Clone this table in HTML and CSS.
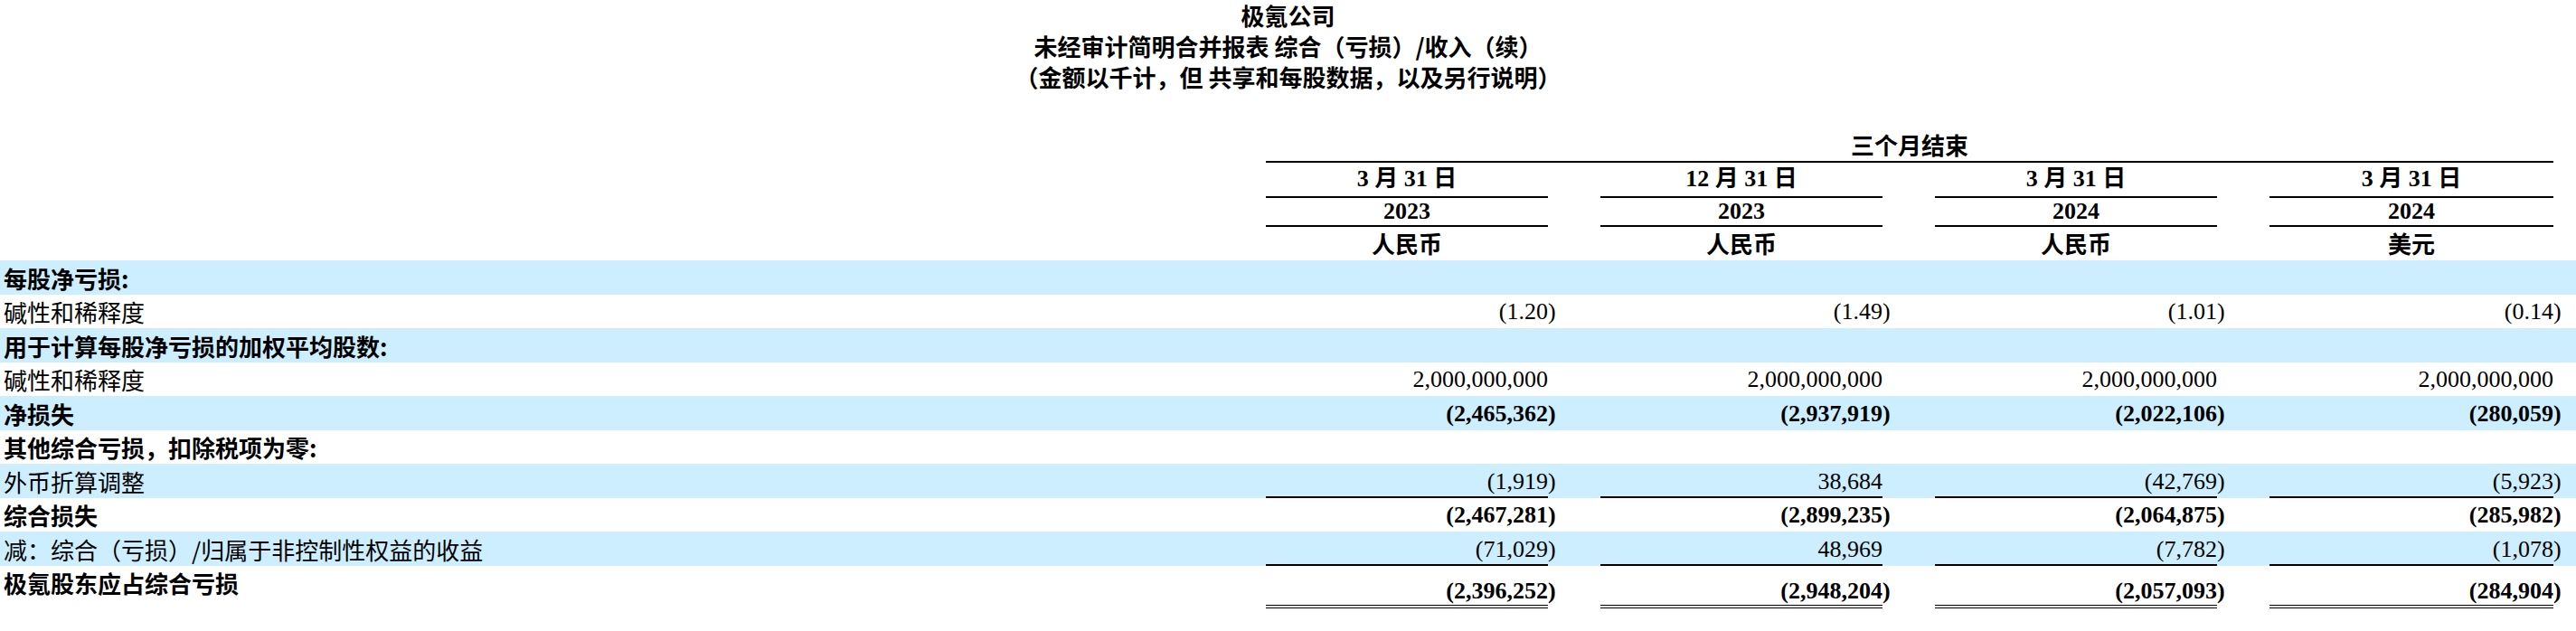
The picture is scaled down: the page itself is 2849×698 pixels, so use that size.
FILE: index.html
```html
<!DOCTYPE html>
<html lang="zh-CN">
<head>
<meta charset="utf-8">
<title>极氪公司 未经审计简明合并报表</title>
<link rel="stylesheet" href="styles.css">
</head>
<body>
<header class="title">
  <div>极氪公司</div>
  <div>未经审计简明合并报表 综合（亏损）/收入（续）</div>
  <div>（金额以千计，但 共享和每股数据，以及另行说明）</div>
</header>

<section class="statement">
  <div class="grid head-a">
    <div></div>
    <div class="period">三个月结束</div>
  </div>
  <div class="grid head-b">
    <div></div>
    <div class="hc">3 月 31 日</div>
    <div class="hc">12 月 31 日</div>
    <div class="hc">3 月 31 日</div>
    <div class="hc">3 月 31 日</div>
  </div>
  <div class="grid head-c">
    <div></div>
    <div class="hc">2023</div>
    <div class="hc">2023</div>
    <div class="hc">2024</div>
    <div class="hc">2024</div>
  </div>
  <div class="grid head-d">
    <div></div>
    <div class="hc cur">人民币</div>
    <div class="hc cur">人民币</div>
    <div class="hc cur">人民币</div>
    <div class="hc cur">美元</div>
  </div>

  <div class="grid row blue bold">
    <div class="lab">每股净亏损:</div>
    <div class="val"></div><div class="val"></div><div class="val"></div><div class="val"></div>
  </div>
  <div class="grid row">
    <div class="lab">碱性和稀释度</div>
    <div class="val"><span>(1.20<span class="rp">)</span></span></div>
    <div class="val"><span>(1.49<span class="rp">)</span></span></div>
    <div class="val"><span>(1.01<span class="rp">)</span></span></div>
    <div class="val"><span>(0.14<span class="rp">)</span></span></div>
  </div>
  <div class="grid row blue bold">
    <div class="lab">用于计算每股净亏损的加权平均股数:</div>
    <div class="val"></div><div class="val"></div><div class="val"></div><div class="val"></div>
  </div>
  <div class="grid row">
    <div class="lab">碱性和稀释度</div>
    <div class="val"><span>2,000,000,000</span></div>
    <div class="val"><span>2,000,000,000</span></div>
    <div class="val"><span>2,000,000,000</span></div>
    <div class="val"><span>2,000,000,000</span></div>
  </div>
  <div class="grid row blue bold">
    <div class="lab">净损失</div>
    <div class="val"><span>(2,465,362<span class="rp">)</span></span></div>
    <div class="val"><span>(2,937,919<span class="rp">)</span></span></div>
    <div class="val"><span>(2,022,106<span class="rp">)</span></span></div>
    <div class="val"><span>(280,059<span class="rp">)</span></span></div>
  </div>
  <div class="grid row bold">
    <div class="lab">其他综合亏损，扣除税项为零:</div>
    <div class="val"></div><div class="val"></div><div class="val"></div><div class="val"></div>
  </div>
  <div class="grid row blue">
    <div class="lab">外币折算调整</div>
    <div class="val ul"><span>(1,919<span class="rp">)</span></span></div>
    <div class="val ul"><span>38,684</span></div>
    <div class="val ul"><span>(42,769<span class="rp">)</span></span></div>
    <div class="val ul"><span>(5,923<span class="rp">)</span></span></div>
  </div>
  <div class="grid row bold">
    <div class="lab">综合损失</div>
    <div class="val"><span>(2,467,281<span class="rp">)</span></span></div>
    <div class="val"><span>(2,899,235<span class="rp">)</span></span></div>
    <div class="val"><span>(2,064,875<span class="rp">)</span></span></div>
    <div class="val"><span>(285,982<span class="rp">)</span></span></div>
  </div>
  <div class="grid row blue">
    <div class="lab">减：综合（亏损）/归属于非控制性权益的收益</div>
    <div class="val ul"><span>(71,029<span class="rp">)</span></span></div>
    <div class="val ul"><span>48,969</span></div>
    <div class="val ul"><span>(7,782<span class="rp">)</span></span></div>
    <div class="val ul"><span>(1,078<span class="rp">)</span></span></div>
  </div>
  <div class="grid row last bold">
    <div class="lab">极氪股东应占综合亏损</div>
    <div class="val dul"><span>(2,396,252<span class="rp">)</span></span></div>
    <div class="val dul"><span>(2,948,204<span class="rp">)</span></span></div>
    <div class="val dul"><span>(2,057,093<span class="rp">)</span></span></div>
    <div class="val dul"><span>(284,904<span class="rp">)</span></span></div>
  </div>
</section>
</body>
</html>
```

FILE: styles.css
```css
* { box-sizing: border-box; }

html, body {
  margin: 0;
  padding: 0;
  background: #ffffff;
  color: #000000;
}

body {
  width: 2849px;
  font-family: "Liberation Serif", "Noto Sans CJK SC", serif;
  font-size: 26px;
}

.title {
  text-align: center;
  font-family: "Noto Sans CJK SC", sans-serif;
  font-weight: 700;
  font-size: 26px;
  line-height: 34px;
}

.grid {
  display: grid;
  grid-template-columns: 1fr 312px 312px 312px 314px;
  column-gap: 58px;
  padding: 0 25px 0 4px;
}

.head-a { margin-top: 42px; }

.period {
  grid-column: 2 / 6;
  text-align: center;
  font-family: "Noto Sans CJK SC", sans-serif;
  font-weight: 700;
  line-height: 32px;
  padding-bottom: 2px;
  border-bottom: 2px solid #000;
}

.hc {
  text-align: center;
  font-weight: 700;
}

.cur { font-family: "Noto Sans CJK SC", sans-serif; }

.head-b .hc {
  height: 39px;
  padding-top: 3px;
  line-height: 30px;
  border-bottom: 2px solid #000;
}

.head-c .hc {
  height: 32px;
  line-height: 30px;
  border-bottom: 2px solid #000;
}

.head-d .hc {
  height: 37px;
  padding-top: 1px;
  line-height: 34px;
}

.row { height: 37.5px; }
.row.blue { background: #cceeff; }
.row.last { height: 47px; }

.lab, .val {
  display: flex;
  align-items: flex-end;
  line-height: 30px;
  padding-bottom: 3px;
}

.lab {
  font-family: "Noto Sans CJK SC", sans-serif;
  white-space: nowrap;
}

.last .lab {
  align-self: start;
  height: 37.5px;
}

.val { justify-content: flex-end; }

.bold .lab, .bold .val { font-weight: 700; }

.rp { margin-right: -0.333em; }

.val.ul { border-bottom: 2px solid #000; padding-bottom: 1px; }

.val.dul { border-bottom: 4px double #000; padding-bottom: 0; }
```
